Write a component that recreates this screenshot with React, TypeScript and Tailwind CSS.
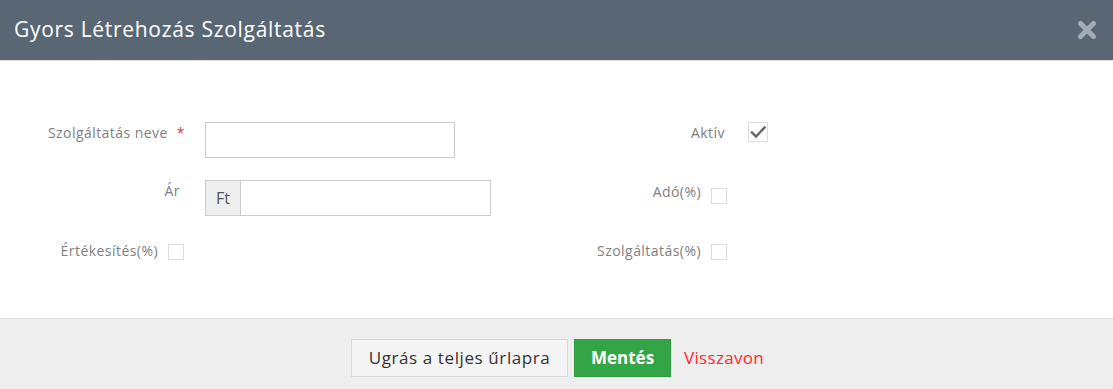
import React from "react";

const font = { fontFamily: '"Open Sans", "Noto Sans", sans-serif' };

function Box({ checked = false, big = false }: { checked?: boolean; big?: boolean }) {
  return (
    <div
      className={`${big ? "w-[20px] h-[20px]" : "w-[16px] h-[16px]"} border border-[#dcdcdc] bg-white flex items-center justify-center`}
    >
      {checked && (
        <svg width="16" height="14" viewBox="0 0 16 14">
          <path d="M2 7.5 L6 11.5 L14.5 2.5" fill="none" stroke="#666" strokeWidth="2.4" strokeLinecap="square" />
        </svg>
      )}
    </div>
  );
}

export default function App() {
  return (
    <div className="w-[1113px] h-[389px] bg-white flex flex-col" style={font}>
      <div className="h-[61px] bg-[#596775] border-b border-[#e3e3e3] flex items-center justify-between pl-[14px] pr-[15px] shrink-0">
        <div className="text-white text-[21px] tracking-[0.7px] leading-[28px] pb-[2px]">Gyors Létrehozás Szolgáltatás</div>
        <svg width="20" height="20" viewBox="0 0 20 20" className="mr-[1px]">
          <path d="M3.5 3.5 L16.5 16.5 M16.5 3.5 L3.5 16.5" stroke="#a3abb5" strokeWidth="5" strokeLinecap="round" />
        </svg>
      </div>
      <div className="flex-1 pt-[61px] text-[14px] tracking-[0.45px] leading-[20px] text-[#808080]">
        <div className="flex h-[36px]">
          <div className="w-[556px] flex">
            <div className="w-[205px] flex justify-end pr-[20px] pt-[1px]">
              <span>Szolgáltatás neve</span>
              <span className="text-[#e43c3c] ml-[9px]">*</span>
            </div>
            <div className="w-[250px] h-[36px] border border-[#cccccc]" />
          </div>
          <div className="flex w-[212px] justify-end items-start">
            <span className="mt-[1px] mr-[23px]">Aktív</span>
            <Box checked big />
          </div>
        </div>
        <div className="flex h-[36px] mt-[22px]">
          <div className="w-[556px] flex">
            <div className="w-[205px] flex justify-end pr-[25px] pt-[1px]">
              <span>Ár</span>
            </div>
            <div className="w-[36px] h-[36px] border border-[#cccccc] bg-[#eeeeee] flex items-center justify-center text-[#555] text-[16px] tracking-normal">
              Ft
            </div>
            <div className="w-[250px] h-[36px] border border-l-0 border-[#cccccc]" />
          </div>
          <div className="flex w-[171px] justify-end items-start pt-[2px]">
            <span className="mr-[10px]">Adó(%)</span>
            <div className="mt-[6px]">
              <Box />
            </div>
          </div>
        </div>
        <div className="flex h-[36px] mt-[25px]">
          <div className="w-[556px] flex items-start">
            <div className="w-[158px] flex justify-end">
              <span>Értékesítés(%)</span>
            </div>
            <div className="ml-[10px] mt-[3px]">
              <Box />
            </div>
          </div>
          <div className="flex w-[171px] justify-end items-start">
            <span className="mr-[10px]">Szolgáltatás(%)</span>
            <div className="mt-[3px]">
              <Box />
            </div>
          </div>
        </div>
      </div>
      <div className="h-[71px] shrink-0 bg-[#eeeeee] border-t border-[#e0e0e0] flex justify-center items-start pt-[20px] pl-[2px]">
        <div className="flex items-center">
          <button className="h-[38px] w-[217px] bg-[#f4f4f4] border border-[#d8d8d8] text-[#333] text-[17px] tracking-[0.6px] flex items-center justify-center">
            Ugrás a teljes űrlapra
          </button>
          <button className="ml-[6px] h-[38px] w-[97px] bg-[#34a547] border border-[#2f9a42] text-white font-bold text-[17px] flex items-center justify-center">
            Mentés
          </button>
          <span className="ml-[13px] text-[#ff2a2a] text-[17px] tracking-[0.3px]">Visszavon</span>
        </div>
      </div>
    </div>
  );
}
